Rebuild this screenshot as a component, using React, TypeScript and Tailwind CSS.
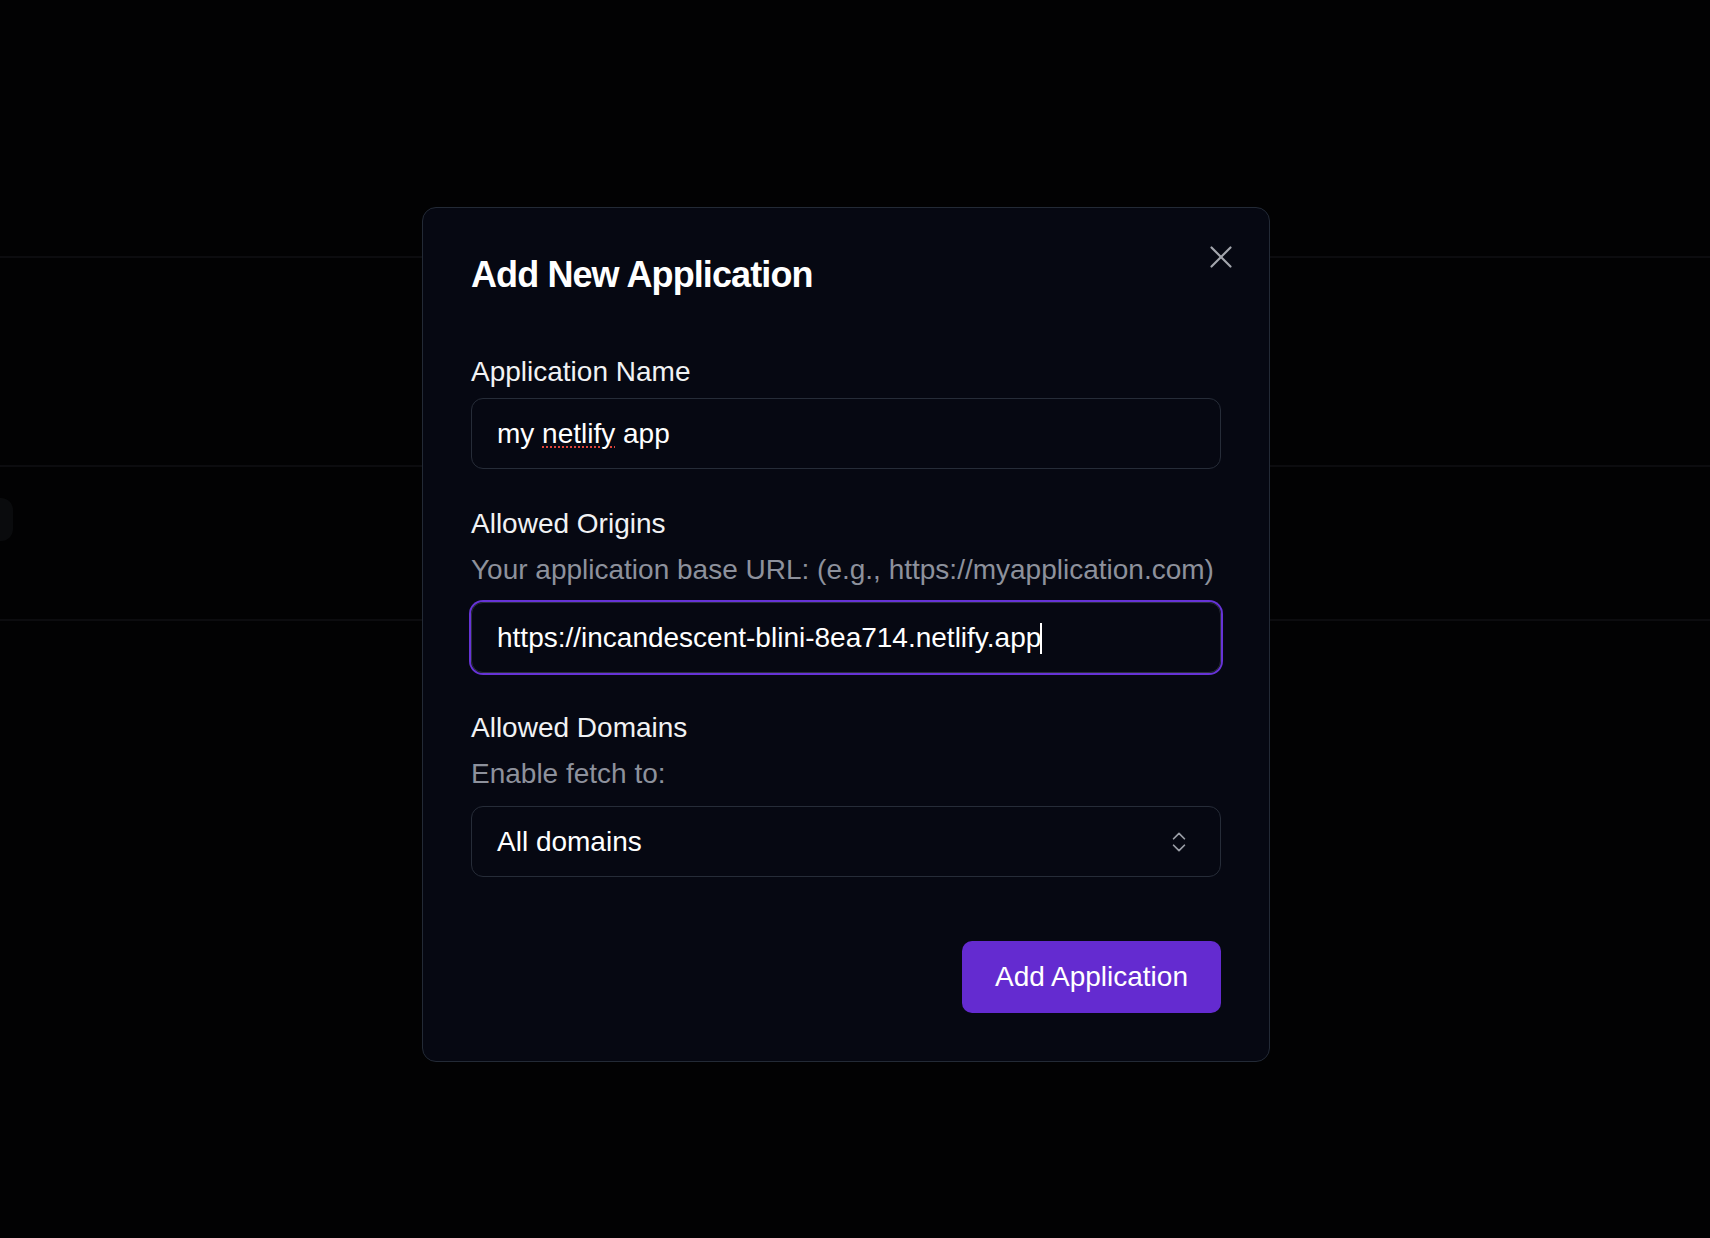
import { X, ChevronsUpDown } from 'lucide-react'

const Field = ({ label, hint, children, className = '' }: { label: string; hint?: string; children: React.ReactNode; className?: string }) => (
  <div className={`flex flex-col ${className}`}>
    <label className={`relative text-[28px] leading-[42px] text-[#f1f2f4] ${hint ? 'top-0' : 'top-[1px]'}`}>{label}</label>
    {hint && <p className="relative -top-[1px] mt-[5px] text-[28px] leading-[42px] text-[#8d919c]">{hint}</p>}
    <div className={hint ? 'mt-[10px]' : 'mt-[6px]'}>{children}</div>
  </div>
)

export default function App() {
  return (
    <div className="relative h-[1238px] w-full overflow-hidden bg-[#020203] font-['Liberation_Sans',Arial,sans-serif]">
      {/* dimmed page behind the dialog */}
      <div className="flex flex-col">
        <div className="h-[258px] border-b-2 border-[#0c0c0f]" />
        <div className="h-[209px] border-b-2 border-[#0c0c0f]" />
        <div className="h-[154px] border-b-2 border-[#0c0c0f]">
          <div className="-ml-[30px] mt-[31px] h-[43px] w-[43px] rounded-[12px] bg-[#0a0b0d]" />
        </div>
      </div>

      {/* dialog */}
      <div className="absolute left-[422px] top-[207px] w-[848px] rounded-[14px] border border-[#232a36] bg-[#060812] p-[48px]">
        <button className="absolute right-[29px] top-[30px] text-[#a3a6ad]">
          <X size={38} strokeWidth={1.35} />
        </button>

        <h2 className="relative top-[1px] text-[36px] font-bold leading-none tracking-[-0.9px] text-white">Add New Application</h2>

        <div className="mt-[58px] flex flex-col">
          <Field label="Application Name">
            <div className="flex h-[71px] items-center rounded-[12px] border border-[#262c38] pl-[25px] text-[28px] text-white">
              <span className="whitespace-pre">my </span>
              <span className="underline decoration-[#e0443a] decoration-dotted decoration-2 underline-offset-[4px]">netlify</span>
              <span className="whitespace-pre"> app</span>
            </div>
          </Field>

          <Field className="mt-[34px]" label="Allowed Origins" hint="Your application base URL: (e.g., https://myapplication.com)">
            <div className="flex h-[71px] items-center rounded-[12px] border border-[#2b303b] pl-[25px] text-[28px] text-white shadow-[0_0_0_2px_#6633d6]">
              <span>https://incandescent-blini-8ea714.netlify.app</span>
              <span className="-ml-[1px] inline-block h-[31px] w-[2px] translate-y-[1px] bg-white" />
            </div>
          </Field>

          <Field className="mt-[34px]" label="Allowed Domains" hint="Enable fetch to:">
            <div className="flex h-[71px] items-center justify-between rounded-[12px] border border-[#262c38] pl-[25px] pr-[28px] text-[28px] text-white">
              <span>All domains</span>
              <ChevronsUpDown size={26} strokeWidth={1.6} className="text-[#9a9ea6]" />
            </div>
          </Field>

          <div className="mt-[64px] flex justify-end">
            <button className="h-[72px] rounded-[10px] bg-[#642bd0] px-[33px] text-[28px] text-white">Add Application</button>
          </div>
        </div>
      </div>
    </div>
  )
}
